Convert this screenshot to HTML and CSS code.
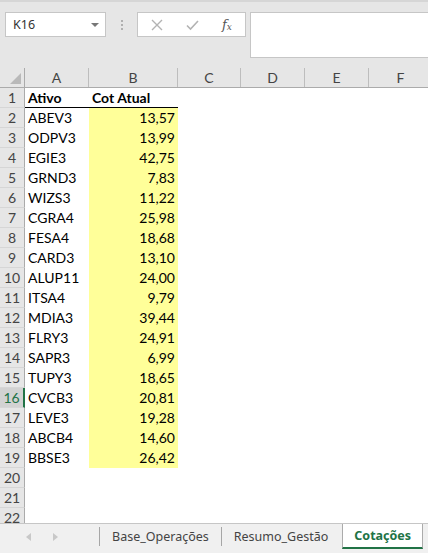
FILE: index.html
```html
<!DOCTYPE html>
<html lang="pt">
<head>
<meta charset="utf-8">
<title>Cotações</title>
<link rel="stylesheet" href="styles.css">
</head>
<body>
<div class="app">
  <div class="toolbar">
    <div class="namebox"><span class="nb-text">K16</span><span class="nb-arrow"></span></div>
    <div class="grip"><i></i><i></i><i></i></div>
    <div class="fbtns">
      <svg class="ic" width="12" height="12" viewBox="0 0 12 12"><path d="M1 1 L11 11 M11 1 L1 11" stroke="#b3b3b3" stroke-width="1.4" fill="none"/></svg>
      <svg class="ic" width="13" height="12" viewBox="0 0 13 12"><path d="M1 6.5 L4.5 10 L12 2" stroke="#b3b3b3" stroke-width="1.6" fill="none"/></svg>
      <span class="fx">f<sub>x</sub></span>
    </div>
    <div class="finput"></div>
  </div>
  <div class="sheet">
    <div class="hrow">
      <div class="corner"><span class="tri"></span></div>
      <div class="ch">A</div><div class="ch w89">B</div><div class="ch w63">C</div><div class="ch">D</div><div class="ch">E</div><div class="ch">F</div>
    </div>
    <div class="row"><div class="rh">1</div><div class="c a bold hb">Ativo</div><div class="c b bold hb left">Cot Atual</div></div>
    <div class="row"><div class="rh">2</div><div class="c a">ABEV3</div><div class="c b y">13,57</div></div>
    <div class="row"><div class="rh">3</div><div class="c a">ODPV3</div><div class="c b y">13,99</div></div>
    <div class="row"><div class="rh">4</div><div class="c a">EGIE3</div><div class="c b y">42,75</div></div>
    <div class="row"><div class="rh">5</div><div class="c a">GRND3</div><div class="c b y">7,83</div></div>
    <div class="row"><div class="rh">6</div><div class="c a">WIZS3</div><div class="c b y">11,22</div></div>
    <div class="row"><div class="rh">7</div><div class="c a">CGRA4</div><div class="c b y">25,98</div></div>
    <div class="row"><div class="rh">8</div><div class="c a">FESA4</div><div class="c b y">18,68</div></div>
    <div class="row"><div class="rh">9</div><div class="c a">CARD3</div><div class="c b y">13,10</div></div>
    <div class="row"><div class="rh">10</div><div class="c a">ALUP11</div><div class="c b y">24,00</div></div>
    <div class="row"><div class="rh">11</div><div class="c a">ITSA4</div><div class="c b y">9,79</div></div>
    <div class="row"><div class="rh">12</div><div class="c a">MDIA3</div><div class="c b y">39,44</div></div>
    <div class="row"><div class="rh">13</div><div class="c a">FLRY3</div><div class="c b y">24,91</div></div>
    <div class="row"><div class="rh">14</div><div class="c a">SAPR3</div><div class="c b y">6,99</div></div>
    <div class="row"><div class="rh">15</div><div class="c a">TUPY3</div><div class="c b y">18,65</div></div>
    <div class="row"><div class="rh sel">16</div><div class="c a">CVCB3</div><div class="c b y">20,81</div></div>
    <div class="row"><div class="rh">17</div><div class="c a">LEVE3</div><div class="c b y">19,28</div></div>
    <div class="row"><div class="rh">18</div><div class="c a">ABCB4</div><div class="c b y">14,60</div></div>
    <div class="row"><div class="rh">19</div><div class="c a">BBSE3</div><div class="c b y">26,42</div></div>
    <div class="row"><div class="rh">20</div></div>
    <div class="row"><div class="rh">21</div></div>
    <div class="row"><div class="rh">22</div></div>
  </div>
  <div class="tabs">
    <div class="nav"><span class="tl"></span><span class="tr"></span></div>
    <div class="tab">Base_Operações</div>
    <div class="tab">Resumo_Gestão</div>
    <div class="tab active">Cotações</div>
  </div>
</div>
</body>
</html>
```
FILE: styles.css
```css
html, body { margin: 0; padding: 0; }
body { width: 428px; height: 553px; overflow: hidden; background: #fff; }
.app { width: 428px; height: 553px; display: flex; flex-direction: column; overflow: hidden; }

.toolbar {
  height: 68px; flex: none; box-sizing: border-box;
  background: #e6e6e6; border-top: 2px solid #d6d6d6;
  display: flex; align-items: flex-start; padding-top: 10px;
  font-family: "Noto Sans", "Open Sans", sans-serif;
}
.namebox {
  margin-left: 5px; width: 101px; height: 25px; box-sizing: border-box;
  background: #fff; border: 1px solid #c6c6c6;
  display: flex; align-items: center; justify-content: space-between;
  padding: 0 6px 0 7px;
}
.nb-text { font-size: 12.5px; color: #333; }
.nb-arrow { width: 0; height: 0; border-left: 4px solid transparent; border-right: 4px solid transparent; border-top: 4px solid #777; }
.grip { width: 31px; height: 25px; display: flex; flex-direction: column; align-items: center; justify-content: center; gap: 2px; }
.grip i { display: block; width: 2px; height: 2px; background: #b0b0b0; }
.fbtns {
  width: 109px; height: 25px; box-sizing: border-box;
  background: #fff; border: 1px solid #c6c6c6;
  display: flex; align-items: center; padding-left: 13px; gap: 0;
}
.fbtns .ic:first-child { margin-right: 23px; }
.fbtns .ic:nth-child(2) { margin-right: 23px; }
.fx { font-family: "DejaVu Serif", "Liberation Serif", serif; font-style: italic; font-size: 13px; color: #555; }
.fx sub { font-size: 9px; vertical-align: -1px; }
.finput {
  margin-left: 4px; flex: 1; height: 46px; box-sizing: border-box;
  background: #fff; border: 1px solid #c6c6c6; border-right: none;
}

.sheet { flex: 1; overflow: hidden; font-family: Lato, "Liberation Sans", sans-serif; font-size: 14px; }
.hrow { height: 20px; display: flex; background: #e6e6e6; border-bottom: 1px solid #ababab; box-sizing: border-box; }
.corner { width: 25px; flex: none; box-sizing: border-box; border-right: 1px solid #ababab; position: relative; }
.tri { position: absolute; right: 3px; bottom: 3px; width: 0; height: 0; border-left: 11px solid transparent; border-bottom: 11px solid #b9b9b9; }
.ch {
  width: 64px; flex: none; box-sizing: border-box; border-right: 1px solid #bdbdbd;
  text-align: center; line-height: 19px; color: #444; font-size: 14px;
}
.ch.w89 { width: 89px; }
.ch.w63 { width: 63px; }

.row { height: 20px; display: flex; }
.rh {
  width: 25px; flex: none; box-sizing: border-box;
  background: #e6e6e6; border-right: 1px solid #ababab; border-bottom: 1px solid #d6d6d6;
  text-align: center; line-height: 20px; color: #444; font-size: 14px;
}
.rh.sel { background: #d2d2d2; color: #217346; border-right: 2px solid #217346; }
.c { box-sizing: border-box; line-height: 20px; color: #000; white-space: nowrap; overflow: hidden; }
.c.a { width: 64px; padding-left: 3px; }
.c.b { width: 89px; padding-right: 3px; text-align: right; }
.c.left { text-align: left; padding-left: 3px; }
.bold { font-weight: bold; }
.hb { border-bottom: 1px solid #000; line-height: 19px; }
.y { background: #ffff99; }

.tabs {
  height: 30px; flex: none; box-sizing: border-box;
  background: #f0f0f0; border-top: 1px solid #c6c6c6;
  display: flex; align-items: flex-start;
  font-family: "Noto Sans", "Open Sans", sans-serif; font-size: 12.5px; color: #444;
}
.nav { width: 100px; height: 25px; flex: none; box-sizing: border-box; border-right: 1px solid #a6a6a6; margin-top: 3px; height: 19px; display: flex; align-items: center; padding-left: 26px; gap: 22px; }
.tl { width: 0; height: 0; border-top: 4px solid transparent; border-bottom: 4px solid transparent; border-right: 5px solid #c8c8c8; }
.tr { width: 0; height: 0; border-top: 4px solid transparent; border-bottom: 4px solid transparent; border-left: 5px solid #c8c8c8; }
.tab { height: 25px; line-height: 25px; padding: 0 13px 0 12px; box-sizing: border-box; position: relative; }
.tab:nth-child(2)::after { content: ""; position: absolute; right: 0; top: 3px; height: 19px; width: 1px; background: #a6a6a6; }
.tab.active {
  background: #fff; color: #217346; font-weight: bold;
  border-left: 1px solid #ababab; border-right: 1px solid #ababab; border-bottom: 2px solid #217346;
  line-height: 23px; margin-left: 1px; padding: 0 11px;
}
```
